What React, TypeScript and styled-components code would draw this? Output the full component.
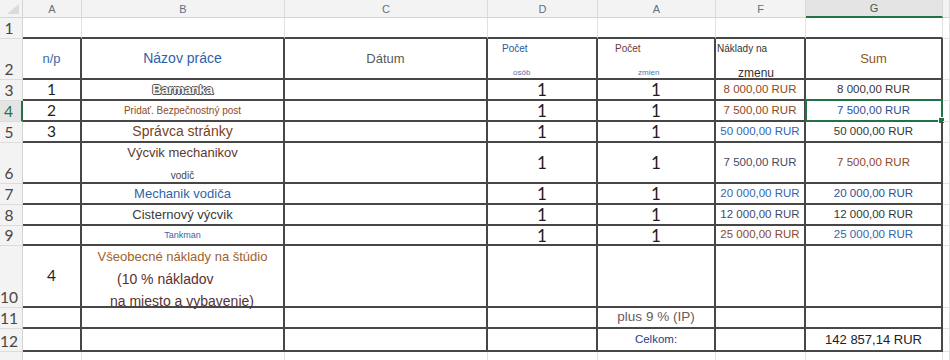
import React from 'react';
import styled, { createGlobalStyle } from 'styled-components';

const GlobalStyle = createGlobalStyle`
  html, body {
    margin: 0;
    padding: 0;
    background: #fff;
  }
  body {
    width: 950px;
    height: 360px;
    overflow: hidden;
    font-family: "Liberation Sans", Arial, sans-serif;
  }
`;

const ROW_HEIGHTS = [18, 21, 41, 21, 21, 21, 41, 21, 21, 20, 62, 21, 23, 20];
const DARK = '#474747';
const LIGHT = '#e1e1e1';
const GREEN = '#217346';

const Sheet = styled.div`
  display: grid;
  grid-template-columns: 23px 59px 203px 203px 110px 118px 90px 137px 1fr;
  grid-template-rows: ${ROW_HEIGHTS.map(h => `${h}px`).join(' ')};
  width: 950px;
  height: 360px;
  overflow: hidden;
`;

const Corner = styled.div`
  position: relative;
  box-sizing: border-box;
  background: #f3f3f3;
  border-right: 1px solid #d4d4d4;
  border-bottom: 1px solid #d4d4d4;

  &::after {
    content: '';
    position: absolute;
    right: 3px;
    bottom: 3px;
    border-left: 12px solid transparent;
    border-bottom: 10px solid #dadada;
  }
`;

const ColHead = styled.div<{ $selected?: boolean }>`
  box-sizing: border-box;
  display: flex;
  align-items: center;
  justify-content: center;
  background: ${p => (p.$selected ? '#e4e4e4' : '#f3f3f3')};
  border-right: 1px solid #dadada;
  border-bottom: ${p => (p.$selected ? `2px solid ${GREEN}` : '1px solid #d4d4d4')};
  font-size: 11px;
  color: ${p => (p.$selected ? '#3d5a48' : '#627184')};
`;

const RowHead = styled.div<{ $selected?: boolean }>`
  box-sizing: border-box;
  display: flex;
  align-items: flex-end;
  justify-content: center;
  padding: 0 4px 1px 0;
  background: ${p => (p.$selected ? '#e4e4e4' : '#f3f3f3')};
  border-right: ${p => (p.$selected ? `2px solid ${GREEN}` : '1px solid #d4d4d4')};
  border-bottom: 1px solid #dcdcdc;
  font-family: Lato, "Noto Sans", sans-serif;
  font-size: 15.5px;
  line-height: 18px;
  color: ${p => (p.$selected ? GREEN : '#4a4540')};
`;

type Frame = 'box' | 'bottom' | 'none';

const Cell = styled.div<{ $frame: Frame; $justify?: string; $align?: string }>`
  position: relative;
  box-sizing: border-box;
  min-width: 0;
  display: flex;
  align-items: ${p => p.$align ?? 'center'};
  justify-content: ${p => p.$justify ?? 'center'};
  white-space: nowrap;
  border-right: ${p => (p.$frame === 'box' ? `2px solid ${DARK}` : `1px solid ${LIGHT}`)};
  border-bottom: ${p => (p.$frame === 'none' ? `1px solid ${LIGHT}` : `2px solid ${DARK}`)};
`;

const Selection = styled.span`
  position: absolute;
  top: -2px;
  left: -1px;
  right: -2px;
  bottom: -2px;
  border: 2px solid ${GREEN};
  pointer-events: none;
`;

const Handle = styled.span`
  position: absolute;
  right: -4px;
  bottom: -4px;
  width: 5px;
  height: 5px;
  background: ${GREEN};
  border: 1px solid #fff;
`;

const Text = styled.span<{ $size: number; $color: string }>`
  font-size: ${p => p.$size}px;
  line-height: 1.2;
  color: ${p => p.$color};
`;

const Digit = styled.span<{ $size: number }>`
  font-family: Lato, "Noto Sans", sans-serif;
  font-size: ${p => p.$size}px;
  line-height: 1;
  color: #1e1e1e;
`;

const Outlined = styled.span`
  font-size: 13px;
  font-weight: bold;
  color: #f7f7f7;
  text-shadow: -1px 0 #555, 1px 0 #555, 0 -1px #555, 0 1px #555, 1px 1px #666;
  letter-spacing: -0.3px;
`;

const Stack = styled.div<{ $gap: number; $top: number }>`
  display: flex;
  flex-direction: column;
  align-self: stretch;
  width: 100%;
  gap: ${p => p.$gap}px;
  padding-top: ${p => p.$top}px;
`;

const Line = styled.span<{ $size: number; $color: string; $indent?: number; $lh?: number }>`
  display: block;
  font-size: ${p => p.$size}px;
  line-height: ${p => (p.$lh ? `${p.$lh}px` : '1.2')};
  color: ${p => p.$color};
  padding-left: ${p => p.$indent ?? 0}px;
  text-align: ${p => (p.$indent === undefined ? 'center' : 'left')};
`;

const BLUE = '#3466ac';
const NAVY = '#2e4f96';
const BROWN = '#8e4a26';
const SLATE = '#3f4c66';
const INK = '#353535';

const money = (v: string, c: string) => <Text $size={11.5} $color={c}>{v}</Text>;
const one = <Digit $size={17}>1</Digit>;
const idx = (n: string) => <Digit $size={15.5}>{n}</Digit>;

type RowDef = { n: string; cells: React.ReactNode[] };

const header: RowDef = {
  n: '2',
  cells: [
    <Text $size={13} $color="#3d6aa6">n/p</Text>,
    <Text $size={14} $color="#2e62a8">Názov práce</Text>,
    <Text $size={13} $color="#5a5a5a">Dátum</Text>,
    <Stack $gap={13} $top={4}>
      <Line $size={10} $color="#2f5595" $indent={14} $lh={12}>Počet</Line>
      <Line $size={8} $color="#5572a8" $indent={25} $lh={10}>osôb</Line>
    </Stack>,
    <Stack $gap={13} $top={4}>
      <Line $size={10} $color="#6b3a3a" $indent={17} $lh={12}>Počet</Line>
      <Line $size={8} $color="#5572a8" $indent={40} $lh={10}>zmien</Line>
    </Stack>,
    <Stack $gap={11} $top={4}>
      <Line $size={10} $color="#333" $indent={1} $lh={12}>Náklady na</Line>
      <Line $size={12} $color="#333" $indent={22} $lh={14}>zmenu</Line>
    </Stack>,
    <Text $size={13} $color="#8a5a1e">Sum</Text>,
  ],
};

const body: RowDef[] = [
  {
    n: '3',
    cells: [idx('1'), <Outlined>Barmanka</Outlined>, null, one, one, money('8 000,00 RUR', BROWN), money('8 000,00 RUR', INK)],
  },
  {
    n: '4',
    cells: [idx('2'), <Text $size={10} $color={BROWN}>Pridať. Bezpečnostný post</Text>, null, one, one, money('7 500,00 RUR', BROWN), money('7 500,00 RUR', NAVY)],
  },
  {
    n: '5',
    cells: [idx('3'), <Text $size={14} $color="#7b3f1e">Správca stránky</Text>, null, one, one, money('50 000,00 RUR', BLUE), money('50 000,00 RUR', INK)],
  },
  {
    n: '6',
    cells: [
      null,
      <Stack $gap={9} $top={2}>
        <Line $size={13} $color="#5a3a2e" $lh={16}>Výcvik mechanikov</Line>
        <Line $size={10} $color="#444" $lh={12}>vodič</Line>
      </Stack>,
      null, one, one, money('7 500,00 RUR', SLATE), money('7 500,00 RUR', BROWN),
    ],
  },
  {
    n: '7',
    cells: [null, <Text $size={13} $color="#2e64a8">Mechanik vodiča</Text>, null, one, one, money('20 000,00 RUR', BLUE), money('20 000,00 RUR', NAVY)],
  },
  {
    n: '8',
    cells: [null, <Text $size={13} $color="#3a3a3a">Cisternový výcvik</Text>, null, one, one, money('12 000,00 RUR', SLATE), money('12 000,00 RUR', INK)],
  },
  {
    n: '9',
    cells: [null, <Text $size={9} $color="#3466ac">Tankman</Text>, null, one, one, money('25 000,00 RUR', BROWN), money('25 000,00 RUR', BLUE)],
  },
  {
    n: '10',
    cells: [
      idx('4'),
      <Stack $gap={0} $top={0}>
        <Line $size={13} $color="#a0622a" $lh={22}>Všeobecné náklady na štúdio</Line>
        <Line $size={14} $color="#5a3030" $indent={35} $lh={22}>(10 % nákladov</Line>
        <Line $size={14} $color="#5a3030" $indent={28} $lh={22}>na miesto a vybavenie)</Line>
      </Stack>,
      null, null, null, null, null,
    ],
  },
  {
    n: '11',
    cells: [null, null, null, null, <Text $size={13.5} $color="#6b5b5b">plus 9 % (IP)</Text>, null, null],
  },
  {
    n: '12',
    cells: [null, null, null, null, <Text $size={11.5} $color="#1f3c88">Celkom:</Text>, null, <Text $size={13} $color="#222">142 857,14 RUR</Text>],
  },
];

const LETTERS = ['A', 'B', 'C', 'D', 'A', 'F', 'G', ''];

const FramedRow: React.FC<{ row: RowDef; selectedCol?: number }> = ({ row, selectedCol }) => (
  <>
    <RowHead $selected={selectedCol !== undefined}>{row.n}</RowHead>
    {row.cells.map((c, i) => (
      <Cell key={i} $frame="box">
        {c}
        {selectedCol === i && (
          <Selection>
            <Handle />
          </Selection>
        )}
      </Cell>
    ))}
    <Cell $frame="none" />
  </>
);

const App: React.FC = () => (
  <>
    <GlobalStyle />
    <Sheet>
      <Corner />
      {LETTERS.map((l, i) => (
        <ColHead key={i} $selected={i === 6}>{l}</ColHead>
      ))}

      <RowHead>1</RowHead>
      {LETTERS.slice(0, 7).map((_, i) => (
        <Cell key={i} $frame="bottom" />
      ))}
      <Cell $frame="none" />

      <FramedRow row={header} />
      {body.map(r => (
        <FramedRow key={r.n} row={r} selectedCol={r.n === '4' ? 6 : undefined} />
      ))}

      <RowHead />
      {LETTERS.map((_, i) => (
        <Cell key={i} $frame="none" />
      ))}
    </Sheet>
  </>
);

export default App;
